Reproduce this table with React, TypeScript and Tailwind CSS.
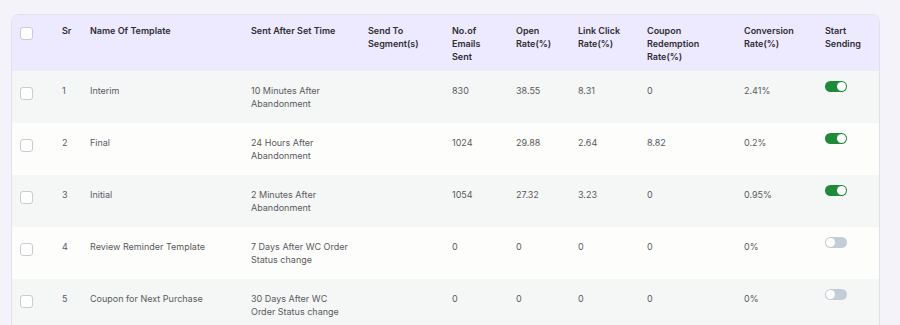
import React from "react";

type Row = {
  sr: number;
  name: string;
  sent: string;
  segment: string;
  emails: string;
  open: string;
  click: string;
  coupon: string;
  conversion: string;
  on: boolean;
};

const rows: Row[] = [
  { sr: 1, name: "Interim", sent: "10 Minutes After\nAbandonment", segment: "", emails: "830", open: "38.55", click: "8.31", coupon: "0", conversion: "2.41%", on: true },
  { sr: 2, name: "Final", sent: "24 Hours After\nAbandonment", segment: "", emails: "1024", open: "29.88", click: "2.64", coupon: "8.82", conversion: "0.2%", on: true },
  { sr: 3, name: "Initial", sent: "2 Minutes After\nAbandonment", segment: "", emails: "1054", open: "27.32", click: "3.23", coupon: "0", conversion: "0.95%", on: true },
  { sr: 4, name: "Review Reminder Template", sent: "7 Days After WC Order\nStatus change", segment: "", emails: "0", open: "0", click: "0", coupon: "0", conversion: "0%", on: false },
  { sr: 5, name: "Coupon for Next Purchase", sent: "30 Days After WC\nOrder Status change", segment: "", emails: "0", open: "0", click: "0", coupon: "0", conversion: "0%", on: false },
];

const cols = "grid grid-cols-[42px_28px_161px_117px_84px_64px_62px_69px_97px_81px_1fr]";

const headers = [
  "Sr",
  "Name Of Template",
  "Sent After Set Time",
  "Send To\nSegment(s)",
  "No.of\nEmails\nSent",
  "Open\nRate(%)",
  "Link Click\nRate(%)",
  "Coupon\nRedemption\nRate(%)",
  "Conversion\nRate(%)",
  "Start\nSending",
];

const Checkbox = () => (
  <span className="block w-[13px] h-[13px] rounded-[3px] border border-[#c9ccd3] bg-white" />
);

const Toggle = ({ on }: { on: boolean }) => (
  <span
    className={
      on
        ? "flex items-center justify-end w-[22px] h-[11px] rounded-full bg-[#1e8a3a] px-[1px]"
        : "flex items-center justify-start w-[22px] h-[11px] rounded-full bg-[#c4ccd8] px-[1px]"
    }
  >
    <span className="block w-[9px] h-[9px] rounded-full bg-white" />
  </span>
);

export default function App() {
  return (
    <div className="w-[900px] h-[325px] overflow-hidden bg-[#f3f3f9] pt-[14px] pl-[11px] font-['Inter',sans-serif] text-[9px] leading-[13px]">
      <div className="w-[869px] rounded-t-[8px] border border-[#e1e1ea] overflow-hidden bg-white">
        <div className={`${cols} h-[56px] bg-[#ede9fe] pl-[8px] pt-[9px] font-semibold text-[#2e2e33]`}>
          <div className="pt-[3px]">
            <Checkbox />
          </div>
          {headers.map((h) => (
            <div key={h} className="whitespace-pre-line">
              {h}
            </div>
          ))}
        </div>
        {rows.map((r, i) => (
          <div
            key={r.sr}
            className={`${cols} h-[52px] pl-[8px] pt-[13px] text-[#5a5a5e] ${
              i % 2 === 0 ? "bg-[#f5f6f6]" : "bg-[#fdfdfc]"
            }`}
          >
            <div className="pt-[3px]">
              <Checkbox />
            </div>
            <div>{r.sr}</div>
            <div>{r.name}</div>
            <div className="whitespace-pre-line">{r.sent}</div>
            <div>{r.segment}</div>
            <div>{r.emails}</div>
            <div>{r.open}</div>
            <div>{r.click}</div>
            <div>{r.coupon}</div>
            <div>{r.conversion}</div>
            <div className="-mt-[3px]">
              <Toggle on={r.on} />
            </div>
          </div>
        ))}
      </div>
    </div>
  );
}
